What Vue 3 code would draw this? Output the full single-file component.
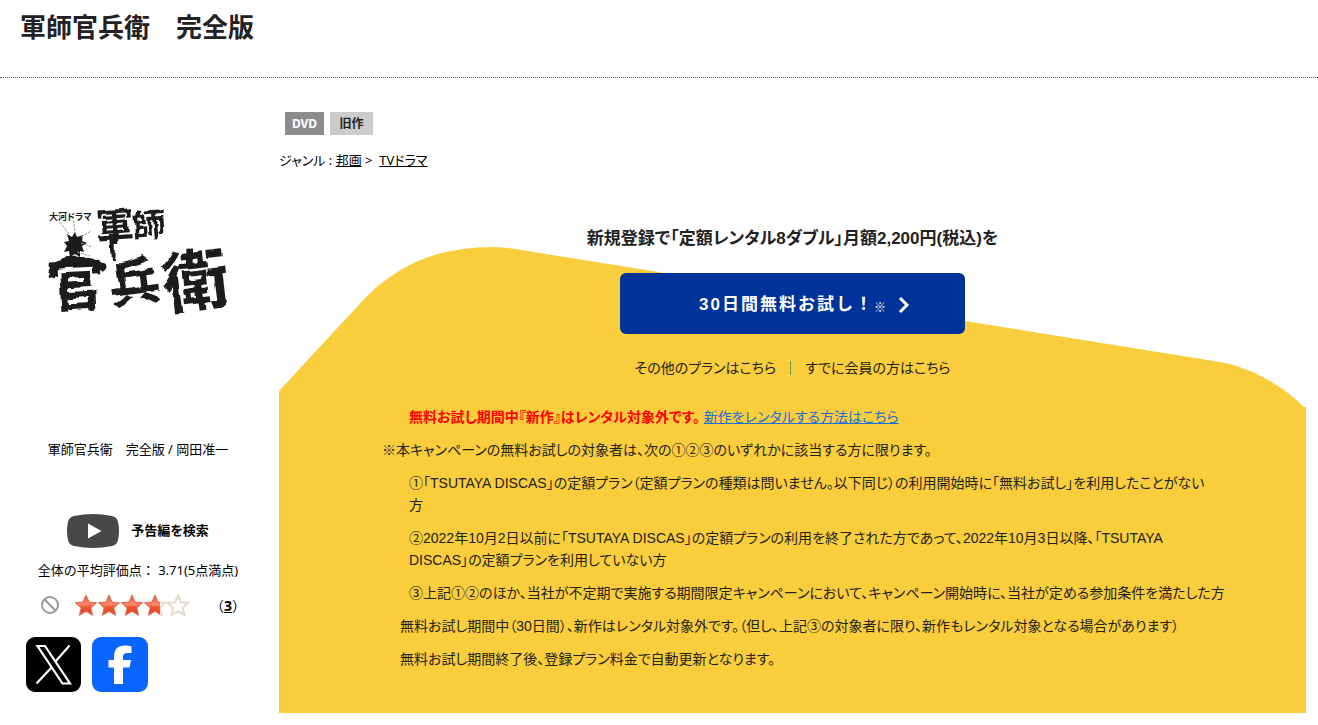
<template>
  <div class="page">
    <header class="page-header">
      <h1 class="page-title">軍師官兵衛　完全版</h1>
    </header>

    <div class="content">
      <aside class="sidebar">
        <svg class="jacket" viewBox="0 0 200 120" role="img" aria-label="大河ドラマ 軍師官兵衛">
          <defs>
            <filter id="brush" filterUnits="userSpaceOnUse" x="-10" y="-20" width="230" height="160">
              <feTurbulence type="fractalNoise" baseFrequency="0.050" numOctaves="2" seed="8" />
              <feDisplacementMap in="SourceGraphic" scale="7" xChannelSelector="R" yChannelSelector="G" />
            </filter>
          </defs>
          <text class="logo-small" x="11" y="20">大河ドラマ</text>
          <g filter="url(#brush)">
            <text class="logo-text" transform="rotate(-4 76 28)" x="58" y="40" font-size="38">軍</text>
            <text class="logo-text" transform="rotate(-4 110 28)" x="94" y="37" font-size="33">師</text>
            <text class="logo-text" transform="rotate(-3 38 90)" x="9" y="106" font-size="58">官</text>
            <text class="logo-text" transform="rotate(-8 96 90)" x="71" y="102" font-size="52">兵</text>
            <text class="logo-text" transform="rotate(-7 158 84)" x="125" y="105" font-size="66">衛</text>
            <path d="M76 34Q79 48 77 60L74 60L72 34Z" fill="#1c1a1a" />
            <path d="M11 79Q8 66 22 60Q42 52 68 64Q70 68 64 71Q48 61 26 65Q16 68 17 78Z" fill="#1c1a1a" />
          </g>
          <path
            d="M29 34l5 3 3-5 2 5 6-2-1 6 5 2-5 3 2 6-4-1 0 6-5-3-5 3-1-6-5 1 3-6-3-4 5-1z"
            fill="#1c1a1a"
          />
          <path
            d="M31 34L21 21M37 31L35 18M43 37l10-6M43 43l11 4M39 52l13 4"
            fill="none"
            stroke="#999"
            stroke-dasharray="3 1"
          />
        </svg>

        <p class="product-name">軍師官兵衛　完全版 / 岡田准一</p>

        <a class="trailer" href="#">
          <svg class="trailer-icon" viewBox="0 0 52 34" aria-hidden="true">
            <path
              d="M7 2Q26-2 45 2Q50 3 51 8Q53 17 51 26Q50 31 45 32Q26 36 7 32Q2 31 1 26Q-1 17 1 8Q2 3 7 2Z"
              fill="#484848"
            />
            <path d="M21 9.500L34.500 17L21 24.500Z" fill="#fff" />
          </svg>
          <span class="trailer-text">予告編を検索</span>
        </a>

        <p class="average">全体の平均評価点： 3.71(5点満点)</p>

        <div class="rating">
          <svg class="no-rate" viewBox="0 0 20 20" aria-hidden="true">
            <circle cx="10" cy="10" r="8" />
            <path d="M4.500 4.500L15.500 15.500" />
          </svg>
          <svg class="stars" viewBox="0 0 115 23" role="img" aria-label="3.71">
            <defs>
              <linearGradient id="starFill" x1="0" y1="0" x2="0" y2="1">
                <stop offset="0" stop-color="#e8553a" />
                <stop offset="0.450" stop-color="#ff8a70" />
                <stop offset="0.600" stop-color="#f4512f" />
                <stop offset="1" stop-color="#e04424" />
              </linearGradient>
              <clipPath id="starPart">
                <rect x="0" y="0" width="85" height="23" />
              </clipPath>
            </defs>
            <path v-for="n in 5" :key="n" class="star-empty" :d="starPath" :transform="starPlace(n)" />
            <g clip-path="url(#starPart)">
              <path v-for="n in 4" :key="n" class="star-full" :d="starPath" :transform="starPlace(n)" />
            </g>
          </svg>
          <span class="review-count">（<a href="#">3</a>）</span>
        </div>

        <div class="share">
          <a href="#" aria-label="X">
            <svg viewBox="0 0 56 56">
              <rect width="55" height="55" rx="9" fill="#000" />
              <path
                d="M11.500 9H19L44 46.500H36.500Z M43.500 8.500L29.500 24.500 M25.500 30.500L10.500 46.500"
                fill="none"
                stroke="#fff"
                stroke-width="2.200"
              />
            </svg>
          </a>
          <a href="#" aria-label="Facebook">
            <svg viewBox="0 0 56 56">
              <rect width="56" height="55" rx="9" fill="#0866ff" />
              <path
                d="M22 47V30.500H16.500V23H22V19.500Q22 8.500 33 8.500Q37 8.500 39.500 9.500V16H35.500Q31 16 31 20V23H39L37.500 30.500H31V47Z"
                fill="#fff"
              />
            </svg>
          </a>
        </div>
      </aside>

      <main class="main">
        <div class="labels">
          <span class="label label-dvd">DVD</span>
          <span class="label label-old">旧作</span>
        </div>
        <p class="genre">
          ジャンル : <a href="#">邦画</a> &gt; &nbsp;<a href="#">TVドラマ</a>
        </p>

        <section class="campaign">
          <svg class="campaign-bg" viewBox="0 0 1027 491" preserveAspectRatio="none" aria-hidden="true">
            <path
              d="M0 169L88 74C125 38 165 25 215 25C222 25 229 26 236 27L941 140C970 145 1000 161 1025 185H1027V491H0Z"
            />
          </svg>
          <div class="campaign-body">
            <h2 class="campaign-title">新規登録で「定額レンタル8ダブル」月額2,200円(税込)を</h2>
            <button type="button" class="trial-button">
              <span class="trial-text">30日間無料お試し！</span>
              <span class="trial-mark">※</span>
              <svg class="trial-arrow" viewBox="0 0 12 18" aria-hidden="true">
                <path d="M2 2L9 9L2 16" />
              </svg>
            </button>
            <nav class="plan-links">
              <a href="#">その他のプランはこちら</a>
              <span class="divider"></span>
              <a href="#">すでに会員の方はこちら</a>
            </nav>

            <div class="notes">
              <p class="note indent">
                <strong>無料お試し期間中『新作』はレンタル対象外です。</strong>
                <a class="note-link" href="#">新作をレンタルする方法はこちら</a>
              </p>
              <p class="note">※本キャンペーンの無料お試しの対象者は、次の①②③のいずれかに該当する方に限ります。</p>
              <p v-for="item in conditions" :key="item" class="note indent">{{ item }}</p>
              <p v-for="item in remarks" :key="item" class="note indent-small">{{ item }}</p>
            </div>
          </div>
        </section>
      </main>
    </div>
  </div>
</template>

<script setup>
const starPath = 'M0 -10.5L2.9 -3.8L10.3 -3.2L4.7 1.8L6.4 9L0 5.2L-6.4 9L-4.7 1.8L-10.3 -3.2L-2.9 -3.8Z'

const starPlace = (n) => `translate(${n * 23 - 12} 12)`

const conditions = [
  '①「TSUTAYA DISCAS」の定額プラン（定額プランの種類は問いません。以下同じ）の利用開始時に「無料お試し」を利用したことがない\n方',
  '②2022年10月2日以前に「TSUTAYA DISCAS」の定額プランの利用を終了された方であって、2022年10月3日以降、「TSUTAYA\nDISCAS」の定額プランを利用していない方',
  '③上記①②のほか、当社が不定期で実施する期間限定キャンペーンにおいて、キャンペーン開始時に、当社が定める参加条件を満たした方',
]

const remarks = [
  '無料お試し期間中（30日間）、新作はレンタル対象外です。（但し、上記③の対象者に限り、新作もレンタル対象となる場合があります）',
  '無料お試し期間終了後、登録プラン料金で自動更新となります。',
]
</script>

<style>
body {
  margin: 0;
  background: #fff;
}
</style>

<style scoped>
.page {
  font-family: "Noto Sans", "Noto Sans CJK JP", sans-serif;
  font-feature-settings: "palt";
  font-size: 13px;
  color: #000;
}

p,
h1,
h2 {
  margin: 0;
}

a {
  color: inherit;
}

.page-header {
  padding: 8px 20px 31px;
  border-bottom: 1px dotted #555;
}

.page-title {
  font-size: 26px;
  line-height: 38px;
  color: #222;
}

.content {
  display: flex;
}

.sidebar {
  flex: none;
  width: 276px;
  padding-top: 122px;
  text-align: center;
}

.jacket {
  display: block;
  width: 200px;
  height: 120px;
  margin: 0 auto;
  overflow: visible;
}

.logo-text,
.logo-small {
  font-family: "Noto Sans CJK JP", sans-serif;
  font-weight: 700;
  fill: #1c1a1a;
}

.logo-small {
  font-size: 9px;
}

.product-name {
  margin-top: 119px;
  line-height: 20px;
  font-feature-settings: normal;
}

.trailer {
  display: flex;
  align-items: center;
  justify-content: center;
  gap: 12px;
  margin-top: 55px;
  font-weight: 700;
  text-decoration: none;
}

.trailer-icon {
  width: 52px;
  height: 34px;
}

.trailer-text {
  padding-bottom: 4px;
}

.average {
  margin-top: 12px;
  line-height: 20px;
  font-feature-settings: normal;
}

.rating {
  display: flex;
  align-items: center;
  height: 24px;
  margin-top: 13px;
  padding-left: 40px;
}

.no-rate {
  width: 20px;
  height: 20px;
  fill: none;
  stroke: #999;
  stroke-width: 2;
}

.stars {
  width: 115px;
  height: 23px;
  margin-left: 15px;
}

.star-empty {
  fill: #fff;
  stroke: #e3dccb;
  stroke-width: 2;
}

.star-full {
  fill: url(#starFill);
  stroke: #d9694f;
  stroke-width: 1;
}

.review-count {
  margin-left: 20px;
  font-size: 14px;
  font-feature-settings: normal;
}

.review-count a {
  font-weight: 700;
}

.share {
  display: flex;
  gap: 10px;
  margin-top: 20px;
  padding-left: 26px;
}

.share svg {
  display: block;
  width: 56px;
  height: 56px;
}

.main {
  flex: 1;
  min-width: 0;
  margin: 34px 12px 0 3px;
}

.labels {
  display: flex;
  gap: 6px;
  padding-left: 6px;
}

.label {
  font-size: 12px;
  line-height: 23px;
  text-align: center;
  font-weight: 700;
}

.label-dvd {
  width: 39px;
  background: #8c8c8c;
  color: #fff;
}

.label-old {
  width: 43px;
  background: #ccc;
  color: #222;
}

.genre {
  margin-top: 15px;
  line-height: 20px;
}

.campaign {
  display: grid;
  margin-top: 52px;
  font-family: "Liberation Sans", "Noto Sans CJK JP", sans-serif;
  color: #222;
}

.campaign-bg,
.campaign-body {
  grid-area: 1 / 1;
}

.campaign-bg {
  width: 100%;
  height: 100%;
  min-height: 0;
  fill: #facd3c;
  contain: size;
}

.campaign-body {
  display: flex;
  flex-direction: column;
  align-items: center;
  padding: 4px 0 43px;
}

.campaign-title {
  font-size: 17px;
  line-height: 26px;
}

.trial-button {
  display: flex;
  align-items: center;
  width: 345px;
  height: 61px;
  margin-top: 21px;
  padding: 0 0 2px 79px;
  border: 0;
  border-radius: 6px;
  background: #039;
  color: #fff;
  font-family: inherit;
  cursor: pointer;
}

.trial-text {
  font-size: 17px;
  font-weight: 700;
  letter-spacing: 2px;
}

.trial-mark {
  padding-top: 8px;
  font-size: 12px;
}

.trial-arrow {
  width: 12px;
  height: 18px;
  margin: 4px 0 0 12px;
  fill: none;
  stroke: #fff;
  stroke-width: 3;
}

.plan-links {
  display: flex;
  align-items: center;
  gap: 14px;
  margin-top: 23px;
  font-size: 14px;
  line-height: 22px;
}

.plan-links a {
  text-decoration: none;
}

.divider {
  width: 1px;
  height: 14px;
  background: #7f9a3c;
}

.notes {
  display: flex;
  flex-direction: column;
  gap: 11px;
  box-sizing: border-box;
  width: 100%;
  margin-top: 27px;
  padding: 0 80px 0 103px;
}

.note {
  font-size: 14px;
  line-height: 22px;
  white-space: pre-line;
}

.note strong {
  color: #f00;
}

.note-link {
  margin-left: 4px;
  color: #1a6fd8;
}

.indent {
  padding-left: 27px;
}

.indent-small {
  padding-left: 18px;
}
</style>
